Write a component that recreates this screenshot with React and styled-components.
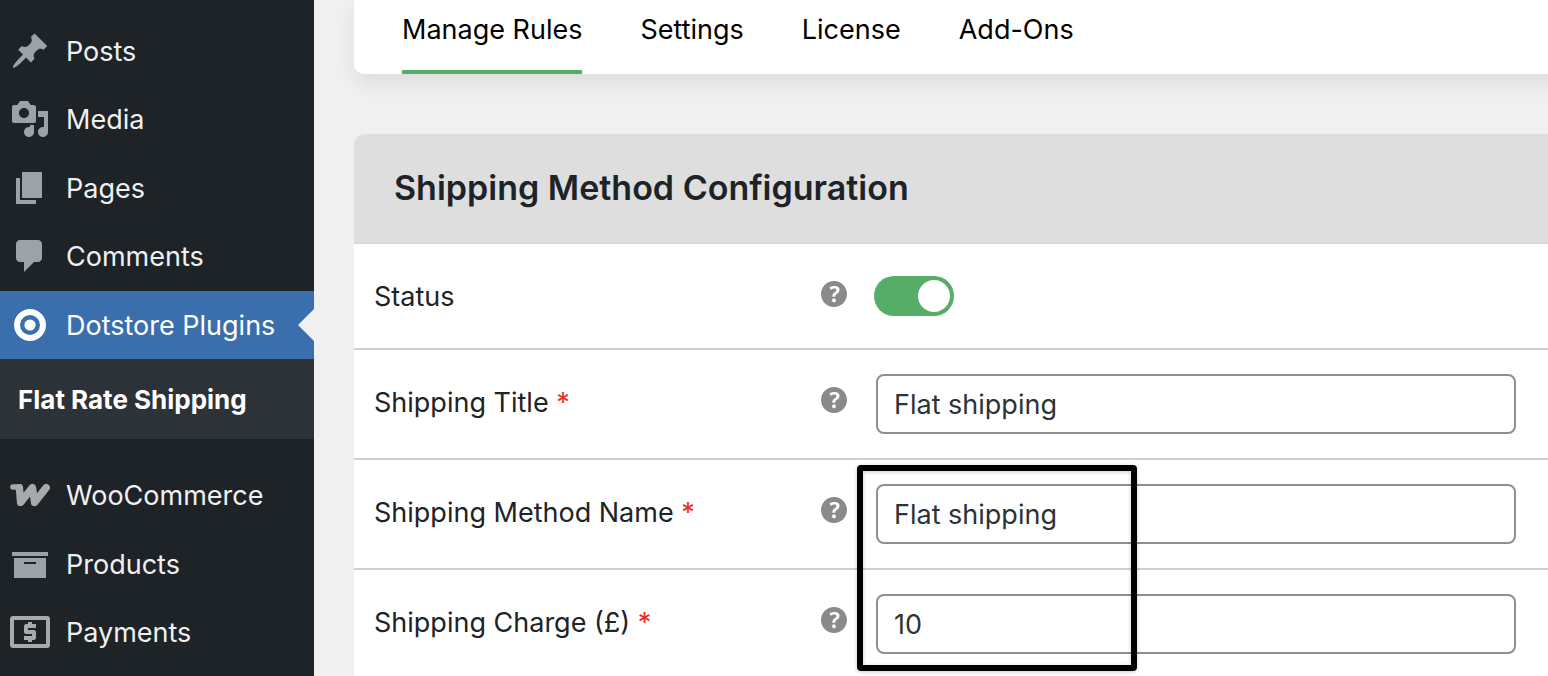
import React from "react";
import styled, { createGlobalStyle, css } from "styled-components";

const GlobalStyle = createGlobalStyle`
  *, *::before, *::after { box-sizing: border-box; }
  body {
    margin: 0;
    background: #f0f0f1;
    color: #1d2327;
    font-family: Inter, "Liberation Sans", sans-serif;
    font-size: 27px;
    line-height: 36px;
  }
`;

const Shell = styled.div`
  display: flex;
  min-height: 100vh;
  overflow-x: clip;
`;

const Sidebar = styled.nav`
  flex: 0 0 314px;
  padding-top: 16px;
  background: #1d2327;
`;

const Menu = styled.ul`
  list-style: none;
  margin: 0;
  padding: 0;
`;

const MenuItem = styled.li`
  &:nth-child(odd) { margin-top: 1px; }
  ${(p) => p.$spaced && "margin-top: 22px;"}
`;

const MenuLink = styled.a`
  position: relative;
  display: flex;
  align-items: center;
  gap: 16px;
  height: 68px;
  padding: 0 10px;
  color: #f0f0f1;
  text-decoration: none;
  white-space: nowrap;

  svg {
    flex: none;
    color: ${(p) => (p.$plainIcon ? "#a7aaad" : "#9ca2a7")};
  }

  ${(p) =>
    p.$current &&
    css`
      background: #3a6eac;
      color: #fff;

      svg { color: #fff; }

      &::after {
        content: "";
        position: absolute;
        right: 0;
        top: 18px;
        border: 16px solid transparent;
        border-left-width: 0;
        border-right-color: #f0f0f1;
      }
    `}
`;

const MenuText = styled.span`
  padding-top: 2px;
`;

const Submenu = styled.div`
  padding: 23px 18px 21px;
  background: #2c3338;
`;

const SubmenuLink = styled.a`
  display: block;
  color: #fff;
  font-size: 26px;
  font-weight: 700;
  text-decoration: none;
  white-space: nowrap;
`;

const Main = styled.main`
  flex: 1;
  min-width: 0;
  display: flex;
  flex-direction: column;
  gap: 60px;
  padding-left: 40px;
`;

const Tabs = styled.nav`
  display: flex;
  gap: 58px;
  margin-right: -40px;
  padding-left: 48px;
  background: #fff;
  border-bottom-left-radius: 10px;
  box-shadow: 0 10px 20px rgba(0, 0, 0, 0.08);
`;

const Tab = styled.a`
  padding: 12px 0 22px;
  border-bottom: 4px solid ${(p) => (p.$active ? "#56ad68" : "transparent")};
  color: #000;
  text-decoration: none;
  white-space: nowrap;
`;

const Card = styled.section`
  position: relative;
  flex: 1;
  background: #fff;
  border-top-left-radius: 10px;
`;

const CardHeader = styled.header`
  padding: 30px 40px;
  background: #dedede;
  border-bottom: 2px solid #d9d9d9;
  border-top-left-radius: 10px;
`;

const Title = styled.h2`
  margin: 0;
  font-size: 34px;
  font-weight: 600;
  line-height: 48px;
`;

const Row = styled.div`
  display: grid;
  grid-template-columns: 427px 26px minmax(0, 1fr);
  align-items: center;
  column-gap: 20px;
  padding: 24px 32px 24px 20px;
  border-bottom: 2px solid #cfcfcf;

  &:last-of-type {
    padding-bottom: 0;
    border-bottom: 0;
  }
`;

const SwitchRow = styled(Row)`
  padding-top: 32px;
  padding-bottom: 32px;
`;

const Label = styled.label`
  padding: ${(p) => (p.$field ? "0 0 2px" : "2px 0 0")};
`;

const Required = styled.span`
  color: #ea2f22;
`;

const HelpButton = styled.button`
  display: block;
  width: 26px;
  height: 26px;
  margin-bottom: ${(p) => (p.$field ? "8px" : "4px")};
  padding: 0;
  border: 0;
  background: none;
  color: #8a8a8a;

  svg { display: block; }
`;

const Control = styled.div`
  display: flex;
  padding-left: 7px;
`;

const TextInput = styled.input`
  width: 100%;
  max-width: 640px;
  height: 60px;
  margin: 0 0 0 2px;
  padding: 0 16px;
  border: 2px solid #8c8f94;
  border-radius: 8px;
  background: #fff;
  color: #2c3338;
  font: inherit;
`;

const Switch = styled.input`
  appearance: none;
  display: flex;
  align-items: center;
  justify-content: flex-start;
  width: 80px;
  height: 40px;
  margin: 0;
  padding: 4px;
  border-radius: 20px;
  background: #b5b5b5;

  &::before {
    content: "";
    width: 32px;
    height: 32px;
    border-radius: 50%;
    background: #fff;
  }

  &:checked {
    justify-content: flex-end;
    background: #56ad68;
  }
`;

/* Marks the name and charge fields; floats over the form. */
const Highlight = styled.div`
  position: absolute;
  left: 503px;
  top: 331px;
  width: 280px;
  height: 206px;
  border: 6px solid #000;
  border-radius: 4px;
  box-shadow: 0 1px 4px rgba(0, 0, 0, 0.2), inset 0 1px 4px rgba(0, 0, 0, 0.2);
  pointer-events: none;
`;

const Icon = ({ children }) => (
  <svg width="40" height="40" viewBox="0 0 20 20" fill="currentColor" aria-hidden="true">
    {children}
  </svg>
);

const icons = {
  posts: (
    <path d="M10.44 3.02l1.82-1.82 6.36 6.35-1.83 1.82c-1.05-.68-2.48-.57-3.41.36l-.75.75c-.92.93-1.04 2.35-.35 3.41l-1.83 1.82-2.41-2.41-2.8 2.79c-.42.42-3.38 2.71-3.8 2.29s1.86-3.39 2.28-3.81l2.79-2.79L4.1 9.36l1.83-1.82c1.05.69 2.48.57 3.4-.36l.75-.75c.93-.92 1.05-2.35.36-3.41z" />
  ),
  media: (
    <path d="M13 11V4c0-.55-.45-1-1-1h-1.67L9 1H5L3.67 3H2c-.55 0-1 .45-1 1v7c0 .55.45 1 1 1h10c.55 0 1-.45 1-1zM7 4.5c1.38 0 2.5 1.12 2.5 2.5S8.38 9.5 7 9.5 4.5 8.38 4.5 7 5.62 4.5 7 4.5zM14 6h5v10.5c0 1.38-1.12 2.5-2.5 2.5S14 17.88 14 16.5s1.12-2.5 2.5-2.5c.17 0 .34.02.5.05V9h-3V6zm-4 8.05V13h2v3.5c0 1.38-1.12 2.5-2.5 2.5S7 17.88 7 16.5 8.12 14 9.5 14c.17 0 .34.02.5.05z" />
  ),
  pages: <path d="M6 15V2h10v13H6zm-1 1h8v2H3V5h2v11z" />,
  comments: (
    <path d="M5 2h9c1.1 0 2 .9 2 2v7c0 1.1-.9 2-2 2h-2l-5 5v-5H5c-1.1 0-2-.9-2-2V4c0-1.1.9-2 2-2z" />
  ),
  dotstore: (
    <>
      <circle cx="10" cy="10" r="6.5" fill="none" stroke="currentColor" strokeWidth="3" />
      <circle cx="10" cy="10" r="2.8" />
    </>
  ),
  woo: (
    <g fill="none" stroke="currentColor" strokeLinecap="round" strokeLinejoin="round">
      <path d="M1.500 6H4.500" strokeWidth="2.800" />
      <path d="M4.700 6.400L5.300 13.700L11.200 6.300L12.300 13.700L18.100 6.300" strokeWidth="3.700" />
    </g>
  ),
  products: <path d="M19 4v2H1V4h18zM2 7h16v10H2V7zm11 3V9H7v1h6z" />,
  payments: (
    <>
      <rect x="1" y="3" width="18" height="14" rx="0.6" fill="none" stroke="currentColor" strokeWidth="2" />
      <path d="M9 5h2v1h2v2H9v1h3.2l.8.8v3.4l-.8.8H11v1H9v-1H7v-2h4v-1H7.8L7 10.200V6.800L7.800 6H9z" />
    </>
  ),
};

const primaryItems = [
  { id: "posts", label: "Posts" },
  { id: "media", label: "Media" },
  { id: "pages", label: "Pages" },
  { id: "comments", label: "Comments" },
  { id: "dotstore", label: "Dotstore Plugins", current: true, submenu: "Flat Rate Shipping" },
  { id: "woo", label: "WooCommerce", spaced: true, plainIcon: true },
  { id: "products", label: "Products" },
  { id: "payments", label: "Payments", plainIcon: true },
];

const tabs = ["Manage Rules", "Settings", "License", "Add-Ons"];

const fields = [
  { id: "shipping-title", label: "Shipping Title", value: "Flat shipping" },
  { id: "shipping-method-name", label: "Shipping Method Name", value: "Flat shipping" },
  { id: "shipping-charge", label: "Shipping Charge (£)", value: "10" },
];

const Help = ({ topic, field }) => (
  <HelpButton type="button" aria-label={`Help: ${topic}`} $field={field}>
    <svg width="26" height="26" viewBox="3 3 14 14" fill="currentColor" aria-hidden="true">
      <path d="M17 10c0-3.87-3.14-7-7-7-3.87 0-7 3.13-7 7s3.13 7 7 7c3.86 0 7-3.13 7-7zm-6.3 1.48H9.14v-.43c0-.38.08-.7.24-.98s.46-.57.88-.89c.41-.29.68-.53.81-.71.14-.18.2-.39.2-.62 0-.25-.09-.44-.28-.58-.19-.13-.45-.19-.79-.19-.58 0-1.25.19-2 .57l-.64-1.28c.87-.49 1.8-.74 2.77-.74.81 0 1.45.2 1.92.58.48.39.71.91.71 1.55 0 .43-.09.8-.29 1.11-.19.32-.57.67-1.11 1.06-.38.28-.61.49-.71.63-.1.15-.15.34-.15.57v.35zm-1.47 2.74c-.18-.17-.27-.42-.27-.73 0-.33.08-.58.26-.75s.43-.25.77-.25c.32 0 .57.09.75.26s.27.42.27.74c0 .3-.09.55-.27.72-.18.18-.43.27-.75.27-.33 0-.58-.09-.76-.26z" />
    </svg>
  </HelpButton>
);

export default function App() {
  return (
    <>
      <GlobalStyle />
      <Shell>
        <Sidebar aria-label="Admin menu">
          <Menu>
            {primaryItems.map((item) => (
              <MenuItem key={item.id} $spaced={item.spaced}>
                <MenuLink href="#" $current={item.current} $plainIcon={item.plainIcon}>
                  <Icon>{icons[item.id]}</Icon>
                  <MenuText>{item.label}</MenuText>
                </MenuLink>
                {item.submenu && (
                  <Submenu>
                    <SubmenuLink href="#">{item.submenu}</SubmenuLink>
                  </Submenu>
                )}
              </MenuItem>
            ))}
          </Menu>
        </Sidebar>
        <Main>
          <Tabs aria-label="Plugin sections">
            {tabs.map((tab, i) => (
              <Tab key={tab} href="#" $active={i === 0}>
                {tab}
              </Tab>
            ))}
          </Tabs>
          <Card>
            <CardHeader>
              <Title>Shipping Method Configuration</Title>
            </CardHeader>
            <form>
              <SwitchRow>
                <Label htmlFor="status">Status</Label>
                <Help topic="Status" />
                <Control>
                  <Switch id="status" type="checkbox" role="switch" defaultChecked />
                </Control>
              </SwitchRow>
              {fields.map((f) => (
                <Row key={f.id}>
                  <Label htmlFor={f.id} $field>
                    {f.label} <Required>*</Required>
                  </Label>
                  <Help topic={f.label} field />
                  <Control>
                    <TextInput id={f.id} type="text" defaultValue={f.value} />
                  </Control>
                </Row>
              ))}
            </form>
            <Highlight />
          </Card>
        </Main>
      </Shell>
    </>
  );
}
